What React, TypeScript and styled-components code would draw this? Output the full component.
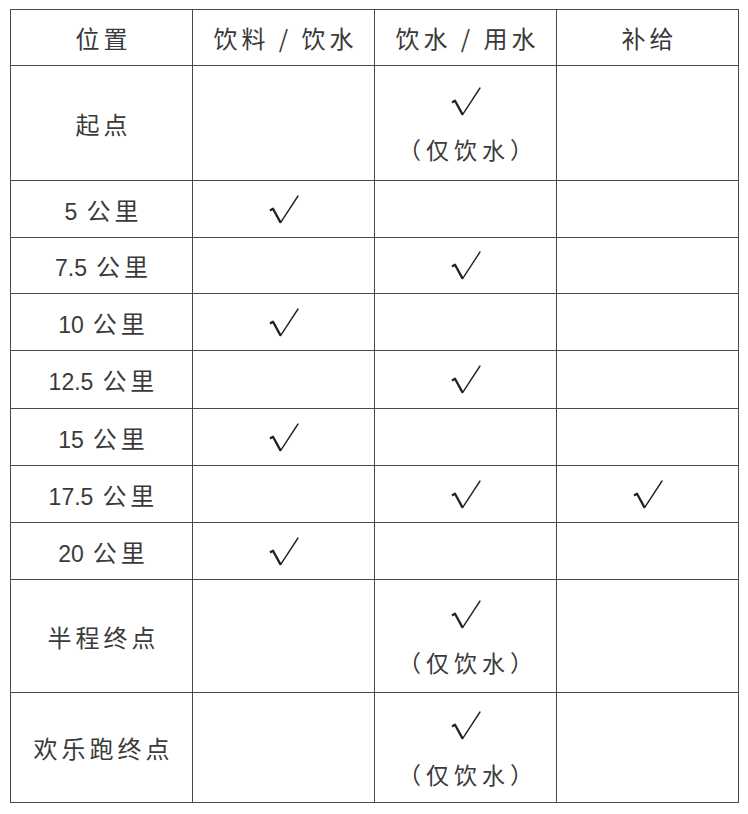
import * as React from "react";
import styled, { createGlobalStyle } from "styled-components";

const GlobalStyle = createGlobalStyle`
  html, body {
    margin: 0;
    padding: 0;
    background: #fff;
  }
  body {
    font-family: "Noto Sans CJK SC", "Liberation Sans", sans-serif;
    color: #3a3a3a;
  }
`;

type Mark = "" | "check" | "drinkOnly";

interface StationRow {
  place: string;
  km?: string;
  height: number;
  drink: Mark;
  water: Mark;
  supply: Mark;
}

const rows: StationRow[] = [
  { place: "起点", height: 115, drink: "", water: "drinkOnly", supply: "" },
  { place: "公里", km: "5", height: 57, drink: "check", water: "", supply: "" },
  { place: "公里", km: "7.5", height: 56, drink: "", water: "check", supply: "" },
  { place: "公里", km: "10", height: 57, drink: "check", water: "", supply: "" },
  { place: "公里", km: "12.5", height: 58, drink: "", water: "check", supply: "" },
  { place: "公里", km: "15", height: 57, drink: "check", water: "", supply: "" },
  { place: "公里", km: "17.5", height: 57, drink: "", water: "check", supply: "check" },
  { place: "公里", km: "20", height: 57, drink: "check", water: "", supply: "" },
  { place: "半程终点", height: 113, drink: "", water: "drinkOnly", supply: "" },
  { place: "欢乐跑终点", height: 110, drink: "", water: "drinkOnly", supply: "" },
];

// the hand-set check mark used in the table
const CheckIcon: React.FC = () => (
  <svg width="30" height="29" viewBox="0 0 30 29" fill="none" stroke="#222">
    <path d="M1 15.5 L4 13.8 L11.6 27.6" strokeWidth="2.3" strokeLinejoin="round" />
    <path d="M11.6 27.6 L29 1" strokeWidth="1.4" strokeLinecap="round" />
  </svg>
);

const MarkCell: React.FC<{ mark: Mark }> = ({ mark }) => {
  if (mark === "") return <Cell />;
  return (
    <Cell>
      <Check $tall={mark === "drinkOnly"}>
        <CheckIcon />
      </Check>
      {mark === "drinkOnly" && <Note>（仅饮水）</Note>}
    </Cell>
  );
};

const App: React.FC = () => {
  return (
    <Page>
      <GlobalStyle />
      <Table>
        <thead>
          <tr>
            <HeadCell $h={56}>位置</HeadCell>
            <HeadCell $h={56}>饮料 / 饮水</HeadCell>
            <HeadCell $h={56}>饮水 / 用水</HeadCell>
            <HeadCell $h={56}>补给</HeadCell>
          </tr>
        </thead>
        <tbody>
          {rows.map((r, i) => (
            <tr key={i}>
              <PlaceCell $h={r.height}>
                {r.km && <Km>{r.km}</Km>}
                {r.place}
              </PlaceCell>
              <MarkCell mark={r.drink} />
              <MarkCell mark={r.water} />
              <MarkCell mark={r.supply} />
            </tr>
          ))}
        </tbody>
      </Table>
    </Page>
  );
};

export default App;

const Page = styled.div`
  padding: 9px 10px 10px 10px;
`;

const Table = styled.table`
  width: 729px;
  border-collapse: collapse;
  table-layout: fixed;
  border: 1.5px solid #555;
`;

const HeadCell = styled.th<{ $h: number }>`
  height: ${(p) => p.$h}px;
  padding: 0 0 0 4px;
  border: 1.5px solid #4a4a4a;
  font-weight: 400;
  font-size: 24px;
  letter-spacing: 4px;
  text-align: center;
  vertical-align: middle;
  color: #3a3a3a;
  box-sizing: border-box;
`;

const Cell = styled.td`
  padding: 0;
  border: 1.5px solid #4a4a4a;
  text-align: center;
  vertical-align: middle;
  box-sizing: border-box;
`;

const PlaceCell = styled(Cell)<{ $h: number }>`
  height: ${(p) => p.$h}px;
  padding-left: 4px;
  font-size: 24px;
  letter-spacing: 4px;
  color: #3a3a3a;
`;

const Km = styled.span`
  font-family: "Liberation Sans", sans-serif;
  font-size: 23px;
  letter-spacing: 0;
  margin-right: 9px;
`;

const Check = styled.div<{ $tall: boolean }>`
  display: flex;
  justify-content: center;
  align-items: center;
  height: 34px;
  margin-top: ${(p) => (p.$tall ? "4px" : "0")};
`;

const Note = styled.div`
  margin-top: 14px;
  padding-left: 5px;
  font-size: 23px;
  letter-spacing: 5px;
  line-height: 34px;
  color: #3a3a3a;
`;
